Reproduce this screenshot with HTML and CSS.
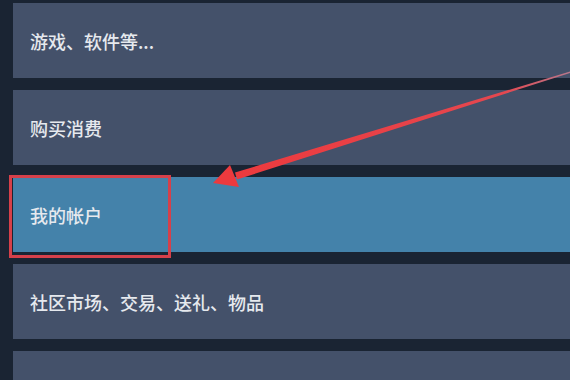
FILE: index.html
```html
<!DOCTYPE html>
<html lang="zh-CN">
<head>
    <meta charset="UTF-8">
    <meta name="viewport" content="width=device-width, initial-scale=1.0">
    <title>Steam 客服</title>
    <link rel="stylesheet" href="styles.css">
</head>
<body>
    <div class="menu">
        <div class="menu-item">游戏、软件等...</div>
        <div class="menu-item">购买消费</div>
        <div class="menu-item active">我的帐户<span class="mark"></span></div>
        <div class="menu-item">社区市场、交易、送礼、物品</div>
        <div class="menu-item">Steam 手机令牌</div>
    </div>
    <svg class="arrow" width="570" height="380" viewBox="0 0 570 380">
        <defs>
            <linearGradient id="shaft" x1="236" y1="176" x2="570" y2="72" gradientUnits="userSpaceOnUse">
                <stop offset="0" stop-color="#ec3a3e"/>
                <stop offset="0.8" stop-color="#e5474f"/>
                <stop offset="1" stop-color="#b8788c"/>
            </linearGradient>
        </defs>
        <polygon points="237,179.5 235,172.5 570,71.5 570,73" fill="url(#shaft)"/>
        <polygon points="213,183 230,165 239,187" fill="#ec3a3e"/>
    </svg>
</body>
</html>
```

FILE: styles.css
```css
body {
    margin: 0;
    padding: 0;
    background-color: #1a2433;
    font-family: "Noto Sans CJK SC", "Noto Sans", sans-serif;
    overflow: hidden;
}
.menu {
    display: flex;
    flex-direction: column;
    gap: 12px;
    padding: 3px 0 0 13px;
}
.menu-item {
    position: relative;
    height: 75px;
    flex-shrink: 0;
    display: flex;
    align-items: center;
    padding-left: 17px;
    background-color: #44516a;
    color: #e6e9ee;
    font-size: 18px;
    font-weight: 500;
}
.menu-item.active {
    background-color: #4482aa;
}
.mark {
    position: absolute;
    left: -4px;
    top: -2px;
    width: 156px;
    height: 77px;
    border: 3px solid #d6404a;
}
.arrow {
    position: absolute;
    left: 0;
    top: 0;
}
```
